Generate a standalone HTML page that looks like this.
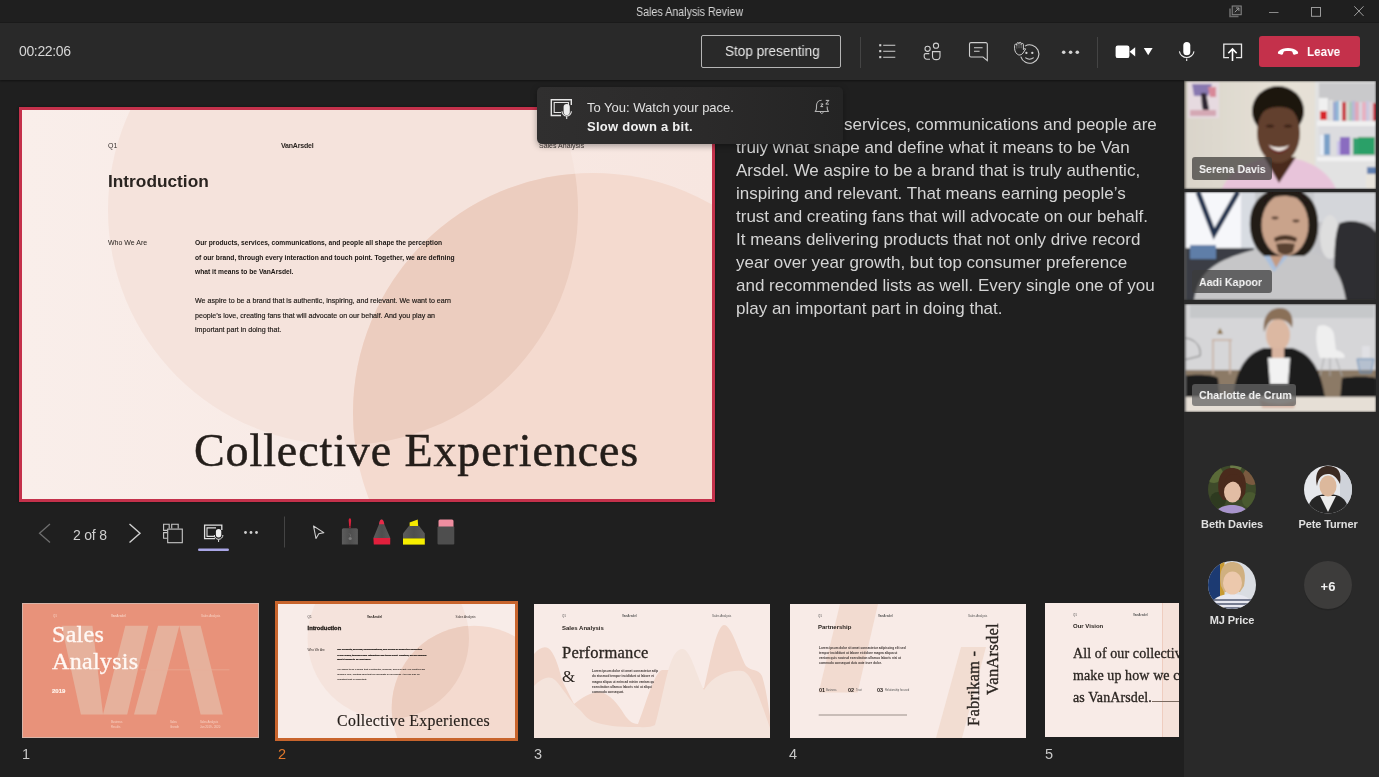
<!DOCTYPE html>
<html><head><meta charset="utf-8">
<style>
*{margin:0;padding:0;box-sizing:border-box}
html,body{width:1379px;height:777px;overflow:hidden;background:#1f1f1f;font-family:"Liberation Sans",sans-serif}
.abs{position:absolute}
#titlebar{left:0;top:0;width:1379px;height:23px;background:#1f1f1f;border-bottom:1px solid #1b1b1b}
#toolbar{left:0;top:23px;width:1379px;height:57px;background:#292929;box-shadow:0 1px 2px rgba(0,0,0,0.45)}
#rpanel{left:1184px;top:80px;width:195px;height:697px;background:#292929}
.t{position:absolute;white-space:nowrap;will-change:transform}
.sc .t{will-change:auto}
svg{position:absolute;overflow:visible}
</style></head><body>
<!-- title bar -->
<div id="titlebar" class="abs">
  <div class="t" style="left:635.7px;top:4.7px;font-size:12px;letter-spacing:0px;color:#d8d8d8;line-height:14px;transform:scaleX(0.892);transform-origin:0 0">Sales Analysis Review</div>
  <!-- popout -->
  <svg style="left:1229px;top:5px" width="14" height="13" viewBox="0 0 14 13">
    <path d="M1 3.5V11.5H9.5" fill="none" stroke="#6a6a6a" stroke-width="1.6"/>
    <rect x="3.2" y="1" width="9" height="8.7" fill="#2a2a2a" stroke="#8a8a8a" stroke-width="1"/>
    <path d="M5.8 7.2l4-4M7 3h2.9v2.9" fill="none" stroke="#9a9a9a" stroke-width="1"/>
  </svg>
  <svg style="left:1269px;top:11.5px" width="10" height="2"><rect x="0" y="0" width="9.5" height="1" fill="#8a8a8a"/></svg>
  <svg style="left:1311px;top:7px" width="10" height="10"><rect x="0.5" y="0.5" width="9" height="8.8" fill="none" stroke="#9a9a9a" stroke-width="1"/></svg>
  <svg style="left:1354px;top:6px" width="10" height="10"><path d="M0.3 0.3l9.2 9.6M9.5 0.3l-9.2 9.6" stroke="#a0a0a0" stroke-width="1"/></svg>
</div>
<!-- toolbar -->
<div id="toolbar" class="abs">
  <div class="t" style="left:19px;top:20px;font-size:14px;color:#d6d6d6;line-height:16px;letter-spacing:-0.35px">00:22:06</div>
  <div class="abs" style="left:701px;top:12px;width:140px;height:33px;border:1.5px solid #b5b5b5;border-radius:2px"></div>
  <div class="t" style="left:724.5px;top:19.5px;font-size:14.3px;color:#e6e6e6;line-height:16px;letter-spacing:0px;transform:scaleX(0.945);transform-origin:0 0">Stop presenting</div>
  <div class="abs" style="left:860px;top:14px;width:1px;height:31px;background:#444"></div>
  <div class="abs" style="left:1097px;top:14px;width:1px;height:31px;background:#444"></div>
</div>
<div id="rpanel" class="abs"></div>

<!-- toolbar icons (page coords) -->
<svg style="left:0;top:0" width="1379" height="80" viewBox="0 0 1379 80">
  <g fill="#d4d4d4">
    <rect x="879.2" y="44.2" width="2.1" height="2.1"/><rect x="879.2" y="50.1" width="2.1" height="2.1"/><rect x="879.2" y="56.1" width="2.1" height="2.1"/>
  </g>
  <g stroke="#cfcfcf" stroke-width="1.1" fill="none">
    <path d="M883.2 45.3H895.3M883.2 51.2H895.3M883.2 57.2H895.3"/>
    <circle cx="927.6" cy="48.8" r="2.6"/>
    <circle cx="936" cy="45.7" r="2.6"/>
    <path d="M929.3 53.6H925.6a1.4 1.4 0 0 0 -1.4 1.4v1.6a2.6 2.6 0 0 0 2.6 2.6H930"/>
    <path d="M932.5 51.6H940v4.6a3.5 3.5 0 0 1 -3.5 3.4H936a3.5 3.5 0 0 1 -3.5 -3.4Z"/>
    <path d="M971 42.6H985.8a1.5 1.5 0 0 1 1.5 1.5V60.6L983 57H971a1.5 1.5 0 0 1 -1.5 -1.5V44.1a1.5 1.5 0 0 1 1.5 -1.5Z"/>
    <path d="M974 47.8H982.6M974 51.3H979.6"/>
    <path d="M1025 46.1A9.2 9.2 0 1 1 1020.8 56.6"/>
    <path d="M1025.3 57.6q4.2 3.2 8.4 0"/>
  </g>
  <g fill="#d4d4d4">
    <circle cx="1026.4" cy="52.9" r="1.15"/><circle cx="1032.3" cy="52.9" r="1.15"/>
    <circle cx="1063.7" cy="52.3" r="1.8"/><circle cx="1070.6" cy="52.3" r="1.8"/><circle cx="1077.3" cy="52.3" r="1.8"/>
  </g>
  <path d="M1018.8 55C1016.5 54.2 1014.8 51.8 1014.6 48.8L1014.6 45.4Q1014.6 44.2 1015.7 44.2Q1016.8 44.2 1016.8 45.4L1016.8 43.8Q1016.8 42.6 1017.9 42.6Q1019 42.6 1019 43.8L1019 43.5Q1019 42.3 1020.1 42.3Q1021.2 42.3 1021.2 43.5L1021.2 44.6Q1021.2 43.4 1022.3 43.4Q1023.4 43.4 1023.4 44.6L1023.4 49.6L1024.3 48.8Q1025.2 48.1 1025.7 48.9L1023 53C1022 54.5 1020.5 55.2 1018.8 55Z" fill="#292929" stroke="#cfcfcf" stroke-width="1"/>
  <path d="M1016.8 45.4V48.6M1019 43.8V48.2M1021.2 43.5V48.2" stroke="#8a8a8a" stroke-width="0.7"/>
  <g fill="#ffffff">
    <rect x="1115.6" y="45.6" width="13.8" height="12.5" rx="2.2"/>
    <path d="M1129.6 51.8L1135.2 47.2V56.4Z"/>
    <path d="M1143.8 48H1152.6L1148.2 55.3Z"/>
    <rect x="1183.3" y="41.9" width="7" height="13.4" rx="3.5"/>
  </g>
  <path d="M1179.4 51.3a7.4 7.4 0 0 0 14.6 0M1186.7 58.6V61" stroke="#f0f0f0" stroke-width="1.1" fill="none"/>
  <path d="M1229 57.6H1223.8V44.2H1241.5V57.6H1236" stroke="#e8e8e8" stroke-width="1.3" fill="none"/>
  <path d="M1232.5 61V49.3M1228.3 53.3L1232.5 49L1236.7 53.3" stroke="#ffffff" stroke-width="1.6" fill="none"/>
</svg>

<!-- main slide -->
<div class="abs" style="left:19px;top:107px;width:696px;height:395px;border:3px solid #c4314b;background:#c4314b;box-shadow:0 0 2px rgba(0,0,0,0.5)"></div>
<div id="slide" class="abs" style="left:22px;top:110px;width:690px;height:389px;overflow:hidden;background:#f8ece8">
  <svg style="left:0;top:0" width="690" height="389" viewBox="0 0 690 389">
    <defs>
      <clipPath id="c1"><circle cx="321" cy="100" r="235"/></clipPath>
      <linearGradient id="bgg" x1="0" y1="0" x2="1" y2="0"><stop offset="0" stop-color="#f9eeea"/><stop offset="1" stop-color="#f7e6e0"/></linearGradient>
    </defs>
    <rect width="690" height="389" fill="url(#bgg)"/>
    <circle cx="321" cy="100" r="235" fill="#f5e3dc"/>
    <circle cx="571" cy="303" r="240" fill="#f4dacf"/>
    <circle cx="571" cy="303" r="240" fill="#eccdbf" clip-path="url(#c1)"/>
  </svg>
  <div class="t" style="left:86px;top:32px;font-size:7px;color:#3a3330">Q1</div>
  <div class="t" style="left:259px;top:32px;font-size:7px;font-weight:bold;color:#2a2420;letter-spacing:-0.2px">VanArsdel</div>
  <div class="t" style="left:517px;top:32px;font-size:7px;color:#3a3330">Sales Analysis</div>
  <div class="t" style="left:86px;top:60.5px;font-size:17.3px;font-weight:bold;color:#2a2420;line-height:20px">Introduction</div>
  <div class="t" style="left:86px;top:129px;font-size:7px;color:#2a2420;line-height:8px">Who We Are</div>
  <div class="t" style="left:172.5px;top:126px;font-size:6.7px;font-weight:bold;color:#1a1512;line-height:14.5px">Our products, services, communications, and people all shape the perception<br>of our brand, through every interaction and touch point. Together, we are defining<br>what it means to be VanArsdel.</div>
  <div class="t" style="left:172.5px;top:184px;font-size:7.1px;color:#1a1512;line-height:14.5px;-webkit-text-stroke:0.15px #1a1512">We aspire to be a brand that is authentic, inspiring, and relevant. We want to earn<br>people&rsquo;s love, creating fans that will advocate on our behalf. And you play an<br>important part in doing that.</div>
  <div class="t" style="left:172px;top:314px;font-size:46px;font-family:'Liberation Serif',serif;color:#241e1a;letter-spacing:0.9px;line-height:54px;-webkit-text-stroke:0.5px #241e1a">Collective Experiences</div>
</div>


<!-- notes -->
<div class="t" style="left:736px;top:113px;font-size:17px;color:#d4d4d4;line-height:23px">&nbsp;<br>truly what shape and define what it means to be Van<br>Arsdel. We aspire to be a brand that is truly authentic,<br>inspiring and relevant. That means earning people&rsquo;s<br>trust and creating fans that will advocate on our behalf.<br>It means delivering products that not only drive record<br>year over year growth, but top consumer preference<br>and recommended lists as well. Every single one of you<br>play an important part in doing that.</div>
<div class="t" style="left:844px;top:113px;font-size:17px;color:#d4d4d4;line-height:23px">services, communications and people are</div>
<!-- toast -->
<div class="abs" style="left:537px;top:87px;width:306px;height:57px;background:linear-gradient(90deg,#302f2f 0%,#2b2a2a 55%,#242424 100%);border-radius:5px;box-shadow:0 2px 6px rgba(0,0,0,0.35)"></div>
<svg style="left:550px;top:99px" width="24" height="22" viewBox="0 0 24 22">
  <path d="M11 16.5H1.3V0.7H21.3V6" stroke="#e6e6e6" stroke-width="1.4" fill="none"/>
  <path d="M11 13.5H4.2V3.5H18.4V6" stroke="#e6e6e6" stroke-width="1.1" fill="none"/>
  <rect x="13.6" y="5" width="6.2" height="11" rx="3.1" fill="#ececec"/>
  <path d="M12 12.3a4.7 4.7 0 0 0 9.4 0M16.7 17v3" stroke="#e6e6e6" stroke-width="1.1" fill="none"/>
</svg>
<div class="t" style="left:587px;top:100px;font-size:13px;color:#e0e0e0;line-height:16px;letter-spacing:0px">To You: Watch your pace.</div>
<div class="t" style="left:587px;top:119px;font-size:13px;font-weight:bold;color:#f0f0f0;line-height:16px;letter-spacing:0.25px">Slow down a bit.</div>
<svg style="left:814px;top:99px" width="17" height="17" viewBox="0 0 17 17">
  <path d="M7.6 1.2C4.6 1.3 2.5 3.6 2.5 6.6V9C2.5 10.5 2 11.5 1.2 12.5H14.4C13.7 11.5 13.2 10.5 13.2 9V7.6" stroke="#b4b4b4" stroke-width="1.1" fill="none" stroke-linejoin="round"/>
  <path d="M6 13.2Q7.8 15.8 9.6 13.2" stroke="#b4b4b4" stroke-width="1" fill="none"/>
  <path d="M6.7 5H9.1L6.7 7.6H9.1M11.8 1.4H14.9L11.8 5.1H14.9" stroke="#c4c4c4" stroke-width="1" fill="none" stroke-linejoin="round"/>
</svg>


<!-- presenter toolbar -->
<svg style="left:0;top:500px" width="480" height="60" viewBox="0 500 480 60">
  <path d="M50 524L39.5 533.3L50 542.6" stroke="#6e6e6e" stroke-width="1.3" fill="none"/>
  <path d="M129.5 524L140 533.3L129.5 542.6" stroke="#d0d0d0" stroke-width="1.4" fill="none"/>
  <g stroke="#c8c8c8" stroke-width="1.1" fill="none">
    <path d="M167.2 530.4H163.6V524.2H169.2V528.6"/>
    <path d="M171.7 528.6V524.2H178.2V528.6"/>
    <path d="M167.2 532.6H163.6V538.2H167.2"/>
    <rect x="167.7" y="529.1" width="14.6" height="13.6"/>
  </g>
  <g stroke="#e0e0e0" fill="none">
    <path d="M215 538.6H204.6V525.1H221.8V530" stroke-width="1.3"/>
    <path d="M215 536.4H207V527.9H216" stroke-width="1.1"/>
  </g>
  <rect x="215.9" y="528.9" width="5.4" height="8.6" rx="2.7" fill="#f0f0f0"/>
  <path d="M214.3 535a4.3 4.3 0 0 0 8.6 0M218.6 539.4V542" stroke="#e0e0e0" stroke-width="1" fill="none"/>
  <rect x="198" y="548.6" width="31" height="2.4" rx="1.2" fill="#a9a6e6"/>
  <g fill="#d0d0d0"><circle cx="245.5" cy="532.5" r="1.4"/><circle cx="251" cy="532.5" r="1.4"/><circle cx="256.5" cy="532.5" r="1.4"/></g>
  <rect x="284" y="516.5" width="1" height="31" fill="#444"/>
  <path d="M313.5 526L323.8 532.6L318.8 533.8L316 538.5Z" stroke="#d0d0d0" stroke-width="1.1" fill="none" stroke-linejoin="round"/>
  <!-- laser -->
  <defs>
    <linearGradient id="pg" x1="0" y1="0" x2="1" y2="0"><stop offset="0" stop-color="#5c5c5c"/><stop offset="0.5" stop-color="#4e4e4e"/><stop offset="1" stop-color="#5a5a5a"/></linearGradient>
  </defs>
  <path d="M349.9 518.2C350.8 518.2 351.2 519.5 351.1 521L350.6 526.6H349.2L348.7 521C348.6 519.5 349 518.2 349.9 518.2Z" fill="#d8203c"/>
  <rect x="348.9" y="526.4" width="2" height="1.8" fill="#8a2030"/>
  <path d="M343.5 528.2H356.3a1.6 1.6 0 0 1 1.6 1.6V544.5H341.9V529.8a1.6 1.6 0 0 1 1.6 -1.6Z" fill="url(#pg)"/>
  <circle cx="350.2" cy="538.5" r="1.6" fill="#7a7a7a"/>
  <path d="M349.2 533.5q1.8 1.2 1.4 3" stroke="#6c6c6c" stroke-width="0.8" fill="none"/>
  <!-- pen -->
  <path d="M381.6 519.6C382.8 519.6 383.6 521 384.3 524.2L390.3 538H373.4L379 524.2C379.6 521 380.4 519.6 381.6 519.6Z" fill="url(#pg)"/>
  <path d="M381.6 519.6C382.8 519.6 383.6 521 384.3 524.2H379C379.6 521 380.4 519.6 381.6 519.6Z" fill="#e82a48"/>
  <path d="M373.4 538H390.3L390.2 544.6H373.8Z" fill="#e11f3c"/>
  <!-- highlighter -->
  <path d="M409.6 522.6L417.7 519.6L418.2 526H409.6Z" fill="#f5e800"/>
  <path d="M408.9 526H419.2L424.8 533.5V538.4H403V533.5Z" fill="url(#pg)"/>
  <rect x="403" y="538.4" width="21.8" height="6.2" fill="#f7ef00"/>
  <!-- eraser -->
  <path d="M440 519.5H452a1.5 1.5 0 0 1 1.5 1.5V527H438.5V521a1.5 1.5 0 0 1 1.5 -1.5Z" fill="#ef8ea0"/>
  <rect x="437.5" y="526.5" width="16.8" height="18" rx="1" fill="#4e4e4e"/>
</svg>
<div class="t" style="left:73px;top:527px;font-size:14px;color:#cfcfcf;line-height:16px;letter-spacing:-0.2px">2 of 8</div>


<!-- videos -->
<svg style="left:1184px;top:81px;overflow:hidden" width="192" height="108" viewBox="0 0 192 108"><defs><filter id="bl81" x="-5%" y="-5%" width="110%" height="110%"><feGaussianBlur stdDeviation="1"/></filter></defs><g filter="url(#bl81)">
  <defs><linearGradient id="w1" x1="0" x2="1"><stop offset="0" stop-color="#d9d4ca"/><stop offset="0.5" stop-color="#e6e1d6"/><stop offset="1" stop-color="#e4e0d8"/></linearGradient></defs>
  <rect width="192" height="108" fill="url(#w1)"/>
  <rect x="0" y="0" width="2" height="108" fill="#8a857c"/>
  <rect x="4" y="1" width="31" height="36" fill="#e6dae0"/>
  <path d="M8 3h20l-4 12h-14z" fill="#8878b0"/><path d="M24 6h8v10h-6z" fill="#d88898"/><path d="M17 12l5 0 3 16-4 6-3-8z" fill="#2e2630"/><rect x="6" y="29" width="26" height="6" fill="#d4a8b4"/>
  <rect x="131" y="0" width="61" height="108" fill="#e2e2e2"/>
  <rect x="135" y="2" width="57" height="38" fill="#c9c9cb"/>
  <g><rect x="135" y="17" width="9" height="23" fill="#f0f0f0"/><rect x="136" y="30" width="7" height="9" fill="#d8262c"/><rect x="145" y="19" width="4" height="21" fill="#e0e0e0"/><rect x="149" y="21" width="3" height="19" fill="#9aa8d0"/><rect x="152" y="20" width="3" height="20" fill="#8fb8d8"/><rect x="155" y="20" width="3" height="20" fill="#e8e8e8"/><rect x="158" y="21" width="4" height="19" fill="#c8303a"/><rect x="162" y="21" width="3" height="19" fill="#d8d8d0"/><rect x="165" y="21" width="3" height="19" fill="#a8c8b8"/><rect x="168" y="20" width="3" height="20" fill="#b8b8d8"/><rect x="171" y="21" width="4" height="19" fill="#e0a8b8"/><rect x="175" y="21" width="3" height="19" fill="#d8d8e0"/><rect x="178" y="21" width="4" height="19" fill="#e8b0c0"/><rect x="182" y="20" width="3" height="20" fill="#c8c8e0"/><rect x="185" y="21" width="4" height="19" fill="#e0d0d8"/><rect x="189" y="22" width="3" height="18" fill="#c83040"/></g>
  <rect x="133" y="40" width="59" height="5" fill="#f0f0f0"/>
  <rect x="135" y="45" width="57" height="32" fill="#dcdcdf"/>
  <rect x="136" y="54" width="5" height="20" fill="#e8eef6"/><rect x="140" y="53" width="6" height="21" fill="#7aa0c8"/>
  <rect x="153" y="60" width="9" height="14" fill="#c8c0e8"/><rect x="156" y="56" width="10" height="18" fill="#8a6cc0"/>
  <rect x="169" y="57" width="6" height="17" fill="#30a070"/><rect x="174" y="56" width="17" height="18" fill="#2aa068"/>
  <rect x="133" y="76" width="59" height="4" fill="#f2f2f2"/>
  <rect x="182" y="92" width="10" height="16" fill="#e8e4dc"/><rect x="183" y="86" width="9" height="7" fill="#6080b0"/>
  <path d="M38 108C44 92 60 82 80 78L112 78C132 82 146 94 152 108Z" fill="#e8c4da"/>
  <path d="M80 76L95 102L112 76Z" fill="#4a2c1e"/>
  <ellipse cx="94" cy="30" rx="26" ry="25" fill="#1c1410"/>
  <ellipse cx="94.5" cy="52" rx="21.5" ry="30" fill="#62402f"/>
  <path d="M73 40C72 26 80 20 95 20C110 20 117 26 116 40C112 30 106 26 95 26C84 26 77 30 73 40Z" fill="#1c1410"/>
  <ellipse cx="86" cy="45" rx="4" ry="1.6" fill="#3a2218"/><ellipse cx="104" cy="45" rx="4" ry="1.6" fill="#3a2218"/>
  <path d="M84 64Q95 76 106 64Q95 69 84 64Z" fill="#f4eee8"/>
  <path d="M84 64Q95 76 106 64L105 67Q95 78 85 67Z" fill="#6a2a28"/>
</g></svg>
<svg style="left:1184px;top:192px;overflow:hidden" width="192" height="108" viewBox="0 0 192 108"><defs><filter id="bl192" x="-5%" y="-5%" width="110%" height="110%"><feGaussianBlur stdDeviation="1"/></filter></defs><g filter="url(#bl192)">
  <rect width="192" height="108" fill="#b4b6ba"/>
  <rect x="0" y="0" width="70" height="56" fill="#f6f7fa"/>
  <rect x="70" y="0" width="80" height="60" fill="#c8cace"/>
  <rect x="130" y="0" width="62" height="108" fill="#c4c4c8"/><rect x="130" y="0" width="62" height="30" fill="#d4d6da"/><ellipse cx="146" cy="45" rx="10" ry="22" fill="#dedede"/>
  <path d="M14 0L30 42L54 0" stroke="#22324e" stroke-width="5" fill="none"/>
  <rect x="0" y="56" width="70" height="52" fill="#3a3c44"/>
  <rect x="6" y="53" width="26" height="14" fill="#5e7ea8"/>
  <rect x="57" y="0" width="14" height="56" fill="#d8dce2"/>
  <path d="M155 32C165 26 180 30 188 36L192 40V108H148C152 80 148 50 155 32Z" fill="#2e2e30"/>
  <path d="M10 108C14 82 28 70 62 60L80 55L110 55L135 62C150 70 158 85 162 108Z" fill="#c6c6c8"/>
  <path d="M74 55L90 80L112 55Z" fill="#a8c0de"/>
  <path d="M82 56L92 76L104 56Z" fill="#c49a80"/>
  <path d="M66 36C64 10 80 -4 101 -4C122 -4 136 10 134 38C133 50 128 60 120 64L80 64C72 58 67 48 66 36Z" fill="#221a15"/>
  <ellipse cx="101" cy="33" rx="23.5" ry="31" fill="#c9a38b"/>
  <path d="M80 10C84 2 92 -2 101 -2C112 -2 120 2 124 12C116 6 108 4 100 4C92 4 86 6 80 10Z" fill="#221a15"/>
  <ellipse cx="91" cy="26" rx="3.5" ry="1.4" fill="#5a4030"/><ellipse cx="112" cy="29" rx="3.5" ry="1.4" fill="#5a4030"/>
  <path d="M90 46Q101 40 113 46L112 50Q101 46 91 50Z" fill="#4c3628"/>
  <path d="M92 52Q101 50 111 52L109 60Q101 66 94 60Z" fill="#5a4232"/>
  <rect x="0" y="0" width="2" height="108" fill="#555"/>
</g></svg>
<svg style="left:1184px;top:304px;overflow:hidden" width="192" height="108" viewBox="0 0 192 108"><defs><filter id="bl304" x="-5%" y="-5%" width="110%" height="110%"><feGaussianBlur stdDeviation="1"/></filter></defs><g filter="url(#bl304)">
  <rect width="192" height="108" fill="#d6d6d8"/>
  <rect x="6" y="1" width="184" height="13" fill="#c6c8ca"/>
  <rect x="0" y="66" width="192" height="28" fill="#8c7a66"/>
  <path d="M0 34C10 34 18 42 16 52L0 56" stroke="#777" stroke-width="1" fill="none"/>
  <path d="M28 36h20M29 36v34M46 36v34" stroke="#c8b0a0" stroke-width="1.5" fill="none"/>
  <path d="M33 30l3-6 3 6z" fill="#8a7040"/>
  <path d="M134 22C140 20 148 22 150 30L152 46C160 48 162 52 160 54L136 54C132 44 131 30 134 22Z" fill="#efefef"/>
  <path d="M140 54L136 72M152 54L158 72M146 54v18" stroke="#aaa" stroke-width="1" fill="none"/>
  <path d="M173 55h17l-3 14h-11z" stroke="#6a90b8" stroke-width="1" fill="#6a90b8" fill-opacity="0.3"/>
  <rect x="178" y="42" width="8" height="12" fill="#e0e0e4"/>
  <path d="M0 72C10 70 28 70 34 74L36 95H0Z" fill="#1c1c1e"/>
  <path d="M158 74C168 72 186 72 192 74V95H156Z" fill="#1c1c1e"/>
  <path d="M48 100C50 70 60 50 80 44L108 44C130 50 138 70 142 100Z" fill="#1a1a1c"/>
  <path d="M84 54L86 80L104 80L106 54Z" fill="#f2f2f2"/>
  <ellipse cx="94" cy="31" rx="12" ry="16" fill="#dcb8a2"/>
  <path d="M80 28C78 12 86 4 96 4C106 4 110 12 108 24C104 16 96 14 88 16C84 18 82 24 80 28Z" fill="#8a7058"/>
  <path d="M88 44h12v10h-12z" fill="#d8b4a0"/>
  <rect x="0" y="93" width="192" height="15" fill="#e6dfd6"/>
  <path d="M76 96Q94 104 112 96L110 104H78Z" fill="#d8b8a8"/>
  <rect x="0" y="0" width="2" height="108" fill="#666"/>
</g></svg>
<div class="abs" style="left:1192px;top:157px;width:80px;height:23px;background:rgba(60,58,56,0.72);border-radius:3px"></div>
<div class="t" style="left:1199px;top:162px;font-size:11.8px;font-weight:bold;color:#f4f4f4;letter-spacing:0px;line-height:14px;transform:scaleX(0.9);transform-origin:0 0">Serena Davis</div>
<div class="abs" style="left:1192px;top:270px;width:80px;height:23px;background:rgba(60,60,60,0.72);border-radius:3px"></div>
<div class="t" style="left:1199px;top:275px;font-size:11.8px;font-weight:bold;color:#f4f4f4;letter-spacing:0px;line-height:14px;transform:scaleX(0.9);transform-origin:0 0">Aadi Kapoor</div>
<div class="abs" style="left:1192px;top:384px;width:104px;height:22px;background:rgba(100,100,100,0.75);border-radius:3px"></div>
<div class="t" style="left:1199px;top:388px;font-size:11.8px;font-weight:bold;color:#f4f4f4;letter-spacing:0px;line-height:14px;transform:scaleX(0.9);transform-origin:0 0">Charlotte de Crum</div>
<!-- avatars -->
<svg style="left:1184px;top:440px" width="195" height="200" viewBox="1184 440 195 200">
  <defs>
    <clipPath id="a1"><circle cx="1232" cy="489.5" r="24"/></clipPath>
    <clipPath id="a2"><circle cx="1328" cy="489.5" r="24"/></clipPath>
    <clipPath id="a3"><circle cx="1232" cy="585" r="24"/></clipPath>
  </defs>
  <g clip-path="url(#a1)">
    <rect x="1200" y="460" width="64" height="60" fill="#3e4a2a"/>
    <circle cx="1214" cy="474" r="9" fill="#5a6a38"/><circle cx="1252" cy="476" r="9" fill="#7a5a40"/><circle cx="1218" cy="500" r="8" fill="#2e3a20"/><circle cx="1250" cy="500" r="8" fill="#4a5a30"/><circle cx="1236" cy="466" r="6" fill="#6a7a48"/>
    <path d="M1214 516C1216 508 1224 505 1232 505C1240 505 1248 508 1250 516Z" fill="#a894cc"/>
    <path d="M1219 494C1216 478 1222 468 1232 468C1243 468 1248 478 1245 494L1241 500L1223 500Z" fill="#4a2a1c"/>
    <ellipse cx="1232.5" cy="492" rx="8.5" ry="10.5" fill="#e2bca4"/>
    <path d="M1224 488C1224 478 1228 474 1234 474C1240 474 1243 480 1242 486C1238 480 1232 478 1224 488Z" fill="#4a2a1c"/>
  </g>
  <g clip-path="url(#a2)">
    <rect x="1300" y="460" width="64" height="60" fill="#e6e8ec"/>
    <rect x="1340" y="466" width="16" height="44" fill="#cfd3da"/>
    <path d="M1306 516C1308 500 1314 494 1328 494C1342 494 1348 500 1350 516Z" fill="#262626"/>
    <path d="M1320 496L1328 512L1336 496Z" fill="#ececec"/>
    <ellipse cx="1328" cy="486" rx="8.5" ry="10.5" fill="#dcb89c"/>
    <path d="M1317 486C1314 472 1320 466 1328 466C1338 466 1342 472 1340 484C1336 476 1332 474 1328 474C1322 474 1318 478 1317 486Z" fill="#3a2a22"/>
  </g>
  <g clip-path="url(#a3)">
    <rect x="1200" y="555" width="64" height="60" fill="#dadde2"/>
    <rect x="1204" y="555" width="17" height="60" fill="#1c3a72"/><rect x="1220" y="555" width="4.5" height="60" fill="#c89a30"/>
    <path d="M1208 612C1210 598 1220 594 1232 594C1244 594 1254 598 1256 612Z" fill="#e8e8f0"/>
    <path d="M1210 600h44M1209 604h46M1208 608h48" stroke="#505870" stroke-width="1.3"/>
    <path d="M1221 586C1218 570 1224 562 1232 562C1242 562 1247 570 1244 586L1240 592H1224Z" fill="#d0b080"/>
    <ellipse cx="1232.5" cy="583" rx="9.5" ry="11.5" fill="#ecc8ac"/>
  </g>
  <circle cx="1328" cy="586.5" r="24" fill="#1e1e1e" opacity="0.35"/><circle cx="1328" cy="585" r="24" fill="#3d3c3b"/>
</svg>
<div class="t" style="left:1184px;top:517px;width:96px;text-align:center;font-size:11px;font-weight:bold;color:#e0e0e0;line-height:14px;letter-spacing:-0.1px">Beth Davies</div>
<div class="t" style="left:1280px;top:517px;width:96px;text-align:center;font-size:11px;font-weight:bold;color:#e0e0e0;line-height:14px;letter-spacing:-0.1px">Pete Turner</div>
<div class="t" style="left:1184px;top:613px;width:96px;text-align:center;font-size:11px;font-weight:bold;color:#e0e0e0;line-height:14px;letter-spacing:-0.1px">MJ Price</div>
<div class="t" style="left:1304px;top:579px;width:48px;text-align:center;font-size:13px;font-weight:bold;color:#f0f0f0;line-height:16px">+6</div>


<!-- thumbnails -->
<div class="abs" style="left:22px;top:603px;width:237px;height:135px;background:#d8b4a8"></div>
<div class="abs" style="left:23px;top:604px;width:235px;height:133px;overflow:hidden;background:#e8927a">
  <svg style="left:-1px;top:-1px" width="236" height="134" viewBox="0 0 236 134">
    <g fill="#e6b19c">
      <path d="M39.6 22.8H70.5L81 111.6H58.9Z"/>
      <path d="M103.3 22.8H126.4L105.2 111.6H81Z"/>
      <path d="M136 22.8H157.3L134.2 111.6H112Z"/>
      <path d="M157.3 22.8H178.6L200.8 111.6H178.6Z"/>
    </g>
    <path d="M118.7 66.8H207.5" stroke="#e9b09a" stroke-width="0.6"/>
    
  </svg>
  <div class="t" style="left:29px;top:17px;font-family:'Liberation Serif',serif;font-size:24px;line-height:27px;color:#fff8f4;letter-spacing:0.3px;-webkit-text-stroke:0.35px #fff8f4">Sales<br>Analysis</div>
  <div class="t" style="left:30px;top:10px;font-size:3px;color:#fbe0d4;opacity:0.8">Q1</div>
  <div class="t" style="left:88px;top:10px;font-size:3px;font-weight:bold;color:#fbe0d4;opacity:0.8">VanArsdel</div>
  <div class="t" style="left:178px;top:10px;font-size:3px;color:#fbe0d4;opacity:0.8">Sales Analysis</div>
  <div class="t" style="left:88px;top:115.5px;font-size:2.8px;line-height:5px;color:#fbe0d4;opacity:0.8">Business<br>Results</div>
  <div class="t" style="left:147px;top:115.5px;font-size:2.8px;line-height:5px;color:#fbe0d4;opacity:0.8">Sales<br>Growth</div>
  <div class="t" style="left:177px;top:115.5px;font-size:2.8px;line-height:5px;color:#fbe0d4;opacity:0.8">Sales Analysis<br>Jan 2019 - 2020</div>
  <div class="t" style="left:29px;top:84px;font-size:6px;font-weight:bold;color:#fff2ea;-webkit-text-stroke:0.2px #fff2ea">2019</div>
</div>
<div class="t" style="left:22px;top:745.5px;font-size:14.5px;color:#c8c8c8;line-height:16px">1</div>

<div class="abs" style="left:275px;top:601px;width:243px;height:140px;background:#c8642c"></div>
<div class="abs" style="left:278px;top:604px;width:237px;height:134px;overflow:hidden;background:#f8ece8">
  <div class="sc" style="position:absolute;left:0;top:0;width:690px;height:389px;transform:scale(0.3435);transform-origin:0 0">
    <svg style="left:0;top:0" width="690" height="389" viewBox="0 0 690 389">
      <rect width="690" height="389" fill="#f8ece8"/>
      <circle cx="321" cy="100" r="235" fill="#f5e3dc"/>
      <circle cx="571" cy="303" r="240" fill="#f4dacf"/>
      <circle cx="571" cy="303" r="240" fill="#eccdbf" clip-path="url(#c1)"/>
    </svg>
    <div class="t" style="left:86px;top:32px;font-size:9px;color:#3a3330">Q1</div><div class="t" style="left:259px;top:32px;font-size:9px;font-weight:bold;color:#2a2420">VanArsdel</div><div class="t" style="left:517px;top:32px;font-size:9px;color:#3a3330">Sales Analysis</div><div class="t" style="left:86px;top:129px;font-size:9px;color:#3a3330">Who We Are</div><div class="t" style="left:86px;top:61px;font-size:16.8px;font-weight:bold;color:#2a2420;line-height:20px;-webkit-text-stroke:1px #2a2420">Introduction</div>
    <div class="t" style="left:172.5px;top:126px;font-size:6.7px;font-weight:bold;color:#2a2420;line-height:14.5px;-webkit-text-stroke:0.7px #2a2420">Our products, services, communications, and people all shape the perception<br>of our brand, through every interaction and touch point. Together, we are defining<br>what it means to be VanArsdel.</div>
    <div class="t" style="left:172.5px;top:184px;font-size:7.1px;color:#2a2420;line-height:14.5px;-webkit-text-stroke:0.15px #2a2420">We aspire to be a brand that is authentic, inspiring, and relevant. We want to earn<br>people&rsquo;s love, creating fans that will advocate on our behalf. And you play an<br>important part in doing that.</div>
    <div class="t" style="left:172px;top:314px;font-size:46px;font-family:'Liberation Serif',serif;color:#241e1a;letter-spacing:0.9px;line-height:54px;-webkit-text-stroke:0.5px #241e1a">Collective Experiences</div>
  </div>
</div>
<div class="t" style="left:278px;top:745.5px;font-size:14.5px;color:#e0782c;line-height:16px">2</div>

<div class="abs" style="left:534px;top:604px;width:236px;height:134px;overflow:hidden;background:#f8ebe7">
  <svg style="left:0;top:0" width="236" height="134" viewBox="0 0 236 134">
    <path d="M0 50C5 44 10 42 14 44C20 48 24 60 28 76L40 100C48 94 56 88 66 88C76 90 84 100 90 110C94 116 98 120 104 120C110 106 120 68 128 66L136 66C142 70 146 78 150 84C156 84 162 86 170 84C176 60 182 22 190 21C198 21 206 52 212 62C218 68 224 64 228 72C232 84 234 100 236 112V134H0Z" fill="#f1d6ca"/>
    <path d="M0 82C6 76 12 72 18 74C26 78 34 96 46 106C50 110 52 114 58 117C70 122 86 123 100 123C110 123 116 124 121 121C126 105 132 70 137 58C140 50 144 45 148 45C156 44 162 70 170 86C180 70 196 66 208 67C218 68 226 96 236 124V134H0Z" fill="#f4e4dc"/>
  </svg>
  <div class="t" style="left:28px;top:21px;font-size:6px;font-weight:bold;color:#2a2420">Sales Analysis</div>
  <div class="t" style="left:28px;top:40px;font-family:'Liberation Serif',serif;font-size:16.5px;line-height:18px;color:#2a2420;letter-spacing:0.2px;-webkit-text-stroke:0.3px #2a2420">Performance</div>
  <div class="t" style="left:28px;top:64px;font-family:'Liberation Serif',serif;font-size:17px;line-height:18px;color:#2a2420">&amp;</div>
  <div class="t" style="left:58px;top:65px;font-size:3.1px;font-weight:bold;line-height:5.3px;color:#3a3230">Lorem ipsum dolor sit amet consectetur adip<br>do eiusmod tempor incididunt ut labore et<br>magna aliqua ut enim ad minim veniam qu<br>exercitation ullamco laboris nisi ut aliqui<br>commodo consequat.</div>
  <div class="t" style="left:28px;top:10px;font-size:3px;color:#555">Q1</div>
  <div class="t" style="left:88px;top:10px;font-size:3px;font-weight:bold;color:#555">VanArsdel</div>
  <div class="t" style="left:178px;top:10px;font-size:3px;color:#555">Sales Analysis</div>
</div>
<div class="t" style="left:534px;top:745.5px;font-size:14.5px;color:#c8c8c8;line-height:16px">3</div>

<div class="abs" style="left:790px;top:604px;width:236px;height:134px;overflow:hidden;background:#f8ebe7">
  <svg style="left:0;top:0" width="236" height="134" viewBox="0 0 236 134">
    <path d="M50 0H88L67.6 88.6H28.7Z" fill="#f2dbd0"/>
    <path d="M171 43H196L172 134H146Z" fill="#f2ddd2"/>
    <path d="M28.7 111H117" stroke="#5a504c" stroke-width="0.6"/>
  </svg>
  <div class="t" style="left:28px;top:10px;font-size:3px;color:#555">Q1</div>
  <div class="t" style="left:88px;top:10px;font-size:3px;font-weight:bold;color:#555">VanArsdel</div>
  <div class="t" style="left:178px;top:10px;font-size:3px;color:#555">Sales Analysis</div>
  <div class="t" style="left:28px;top:20px;font-size:6px;font-weight:bold;color:#2a2420">Partnership</div>
  <div class="t" style="left:29px;top:42px;font-size:3.1px;line-height:5px;font-weight:bold;color:#3a3230">Lorem ipsum dolor sit amet consectetur adipiscing elit sed<br>tempor incididunt ut labore et dolore magna aliqua ut<br>veniam quis nostrud exercitation ullamco laboris nisi ut<br>commodo consequat duis aute irure dolor.</div>
  <div class="t" style="left:28.5px;top:83px;font-size:5.5px;font-weight:bold;color:#2a2420;line-height:7px">01</div>
  <div class="t" style="left:36px;top:85px;font-size:2.6px;color:#555;line-height:4px">Business</div>
  <div class="t" style="left:58px;top:83px;font-size:5.5px;font-weight:bold;color:#2a2420;line-height:7px">02</div>
  <div class="t" style="left:66px;top:85px;font-size:2.6px;color:#555;line-height:4px">Trust</div>
  <div class="t" style="left:87px;top:83px;font-size:5.5px;font-weight:bold;color:#2a2420;line-height:7px">03</div>
  <div class="t" style="left:95px;top:85px;font-size:2.6px;color:#555;line-height:4px">Relationship focused</div>
  <div class="t" style="left:175.5px;top:122px;transform:rotate(-90deg);transform-origin:0 0;font-family:'Liberation Serif',serif;font-size:16.6px;line-height:16px;color:#2a2420;letter-spacing:0.2px;-webkit-text-stroke:0.3px #2a2420">Fabrikam -</div>
  <div class="t" style="left:194.5px;top:90.5px;transform:rotate(-90deg);transform-origin:0 0;font-family:'Liberation Serif',serif;font-size:16.6px;line-height:16px;color:#2a2420;letter-spacing:0.2px;-webkit-text-stroke:0.3px #2a2420">VanArsdel</div>
</div>
<div class="t" style="left:789px;top:745.5px;font-size:14.5px;color:#c8c8c8;line-height:16px">4</div>

<div class="abs" style="left:1045px;top:603px;width:134px;height:134px;overflow:hidden;background:#f8ebe7">
  <div class="abs" style="left:117px;top:0;width:20px;height:134px;background:#f5e2da;border-left:0.8px solid #efcdbf"></div>
  <div class="t" style="left:28px;top:20px;font-size:6px;font-weight:bold;color:#2a2420">Our Vision</div>
  <div class="t" style="left:88px;top:10px;font-size:3px;font-weight:bold;color:#555">VanArsdel</div>
  <div class="t" style="left:28px;top:10px;font-size:3px;color:#555">Q1</div>
  <div class="t" style="left:28px;top:40px;font-family:'Liberation Serif',serif;font-size:14px;line-height:22px;color:#2a2420;letter-spacing:0.1px;-webkit-text-stroke:0.3px #2a2420">All of our collective<br>make up how we come<br>as VanArsdel.</div>
  <div class="abs" style="left:107px;top:98px;width:30px;height:0.8px;background:#7a6a60"></div>
</div>
<div class="t" style="left:1045px;top:745.5px;font-size:14.5px;color:#c8c8c8;line-height:16px">5</div>

<!-- leave -->
<div class="abs" style="left:1259px;top:36px;width:101px;height:31px;background:#c4314b;border-radius:3px"></div>
<svg style="left:1276px;top:45px" width="24" height="12" viewBox="0 0 24 12">
  <path d="M2.3 8.8C1.6 8.6 1.8 7 2.6 6.2 5 3.7 8.5 3 12 3s7 .7 9.4 3.2c.8.8 1 2.4.3 2.6l-3.4.9c-.8.2-1.2-.4-1.4-1.1l-.4-1.4c-.1-.5-.6-.8-1.1-.9-1-.2-2.2-.3-3.4-.3s-2.4.1-3.4.3c-.5.1-1 .4-1.1.9l-.4 1.4c-.2.7-.6 1.3-1.4 1.1Z" fill="#fff"/>
</svg>
<div class="t" style="left:1306.5px;top:44px;font-size:13.3px;font-weight:bold;color:#fff;line-height:16px;letter-spacing:0px;transform:scaleX(0.88);transform-origin:0 0">Leave</div>

</body></html>
